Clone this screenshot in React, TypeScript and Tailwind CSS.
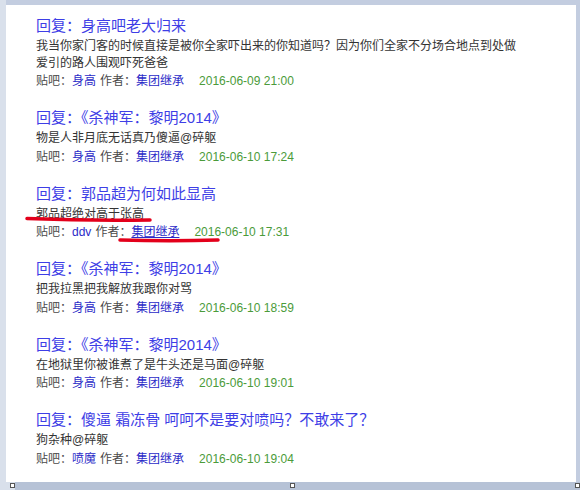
import React from 'react';

type Post = {
  title: string;
  body: string;
  bar: string;
  author: string;
  time: string;
  hot?: boolean;
};

const posts: Post[] = [
  {
    title: '回复：身高吧老大归来',
    body: '我当你家门客的时候直接是被你全家吓出来的你知道吗？因为你们全家不分场合地点到处做爱引的路人围观吓死爸爸',
    bar: '身高',
    author: '集团继承',
    time: '2016-06-09 21:00',
  },
  {
    title: '回复：《杀神军：黎明2014》',
    body: '物是人非月底无话真乃傻逼@碎躯',
    bar: '身高',
    author: '集团继承',
    time: '2016-06-10 17:24',
  },
  {
    title: '回复：郭品超为何如此显高',
    body: '郭品超绝对高于张高',
    bar: 'ddv',
    author: '集团继承',
    time: '2016-06-10 17:31',
    hot: true,
  },
  {
    title: '回复：《杀神军：黎明2014》',
    body: '把我拉黑把我解放我跟你对骂',
    bar: '身高',
    author: '集团继承',
    time: '2016-06-10 18:59',
  },
  {
    title: '回复：《杀神军：黎明2014》',
    body: '在地狱里你被谁煮了是牛头还是马面@碎躯',
    bar: '身高',
    author: '集团继承',
    time: '2016-06-10 19:01',
  },
  {
    title: '回复：傻逼 霜冻骨 呵呵不是要对喷吗？不敢来了？',
    body: '狗杂种@碎躯',
    bar: '喷魔',
    author: '集团继承',
    time: '2016-06-10 19:04',
  },
];

const PostItem = ({ post }: { post: Post }) => (
  <div className="flex flex-col">
    <div className="text-[15px] leading-[22px] text-[#3e3ee6]">{post.title}</div>
    <div className="mt-[1px] w-[486px] text-[12px] leading-[16.5px] text-[#333]">{post.body}</div>
    <div className="mt-[1px] flex items-center text-[12px] leading-[18px] text-[#4a4a4a]">
      <span>贴吧：</span>
      <span className="text-[#2b2bc8]">{post.bar}</span>
      <span className="ml-[4px]">作者：</span>
      <span className={post.hot ? 'text-[#2b2bc8] underline' : 'text-[#2b2bc8]'}>{post.author}</span>
      <span className="ml-[15px] text-[#4b9b3a]">{post.time}</span>
    </div>
  </div>
);

export default function App() {
  return (
    <div
      className="relative w-[580px] h-[490px] bg-[#c3cde0] overflow-hidden"
      style={{ fontFamily: '"Liberation Sans", "Noto Sans CJK SC", sans-serif' }}
    >
      <div className="flex h-[482px]">
        <div className="w-[6px] bg-[#d9e0eb]" />
        <div className="mt-[5px] h-[477px] w-[570px] bg-white pl-[30px] pt-[10px] flex flex-col gap-[17px]">
          {posts.map((p, i) => (
            <PostItem key={i} post={p} />
          ))}
        </div>
      </div>
      <div className="flex h-[8px]">
        <div className="w-[15px] bg-[#d9e0eb]" />
        <div className="flex-1 bg-[#b6c2d6]" />
      </div>

      {/* handles */}
      <div className="absolute left-[10px] top-[483px] w-[5px] h-[5px] border border-[#555] bg-white" />
      <div className="absolute left-[290px] top-[483px] w-[5px] h-[5px] border border-[#555] bg-white" />
      <div className="absolute left-[575px] top-[483px] w-[5px] h-[5px] border border-[#555] bg-white" />

      {/* red marks */}
      <svg className="absolute inset-0 pointer-events-none" width="580" height="490">
        <path d="M27 218.5 Q90 221 150 220" stroke="#e3001b" strokeWidth="3.5" fill="none" strokeLinecap="round" />
        <path d="M120 240 Q170 241.5 218 240" stroke="#e3001b" strokeWidth="3.5" fill="none" strokeLinecap="round" />
      </svg>
    </div>
  );
}
